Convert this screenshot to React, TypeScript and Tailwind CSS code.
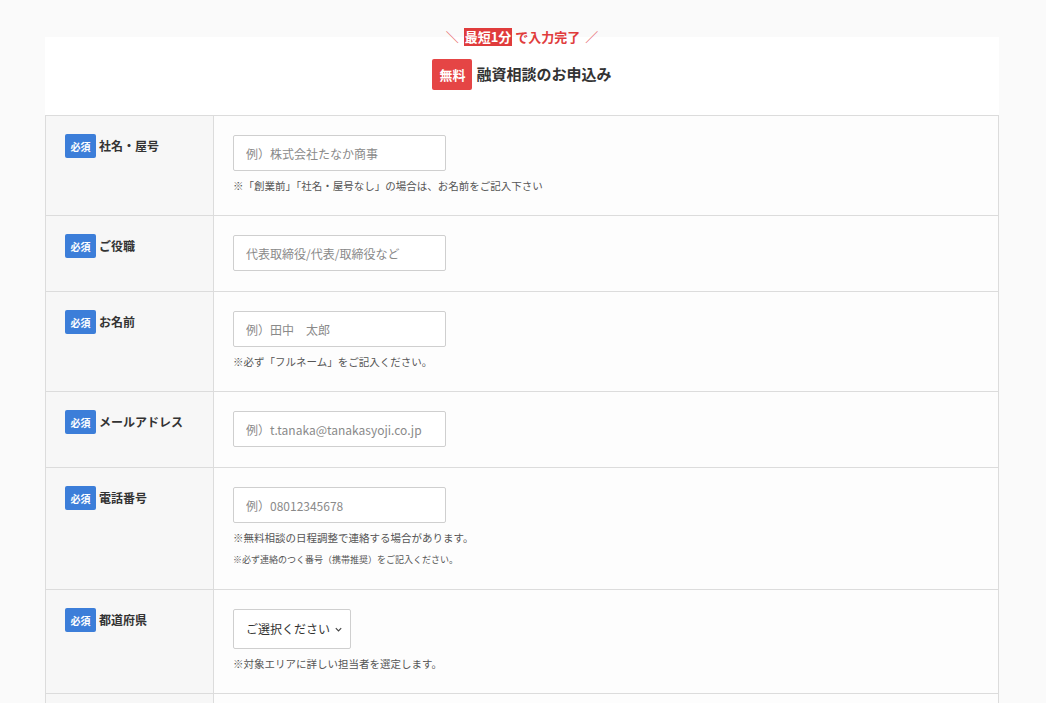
import React from 'react';

const font = "font-['Noto_Sans_CJK_JP','Noto_Sans',sans-serif]";

type Row = {
    label: string;
    kind: 'input' | 'select';
    placeholder?: string;
    notes?: { text: string; small?: boolean }[];
};

const rows: Row[] = [
    { label: '社名・屋号', kind: 'input', placeholder: '例）株式会社たなか商事', notes: [{ text: '※「創業前」「社名・屋号なし」の場合は、お名前をご記入下さい' }] },
    { label: 'ご役職', kind: 'input', placeholder: '代表取締役/代表/取締役など' },
    { label: 'お名前', kind: 'input', placeholder: '例）田中　太郎', notes: [{ text: '※必ず「フルネーム」をご記入ください。' }] },
    { label: 'メールアドレス', kind: 'input', placeholder: '例）t.tanaka@tanakasyoji.co.jp' },
    {
        label: '電話番号',
        kind: 'input',
        placeholder: '例）08012345678',
        notes: [{ text: '※無料相談の日程調整で連絡する場合があります。' }, { text: '※必ず連絡のつく番号（携帯推奨）をご記入ください。', small: true }],
    },
    { label: '都道府県', kind: 'select', notes: [{ text: '※対象エリアに詳しい担当者を選定します。' }] },
    { label: 'ご希望の融資額', kind: 'select', notes: [{ text: '※おおよその金額で構いません。' }] },
];

function Required() {
    return (
        <span className="inline-flex h-[24px] w-[31px] items-center justify-center rounded-[2px] bg-[#3c7ed9] text-[10px] font-bold text-white">
            必須
        </span>
    );
}

function Field({ row }: { row: Row }) {
    return (
        <div className="grid grid-cols-[168px_1fr] border-t border-[#dcdcdc]">
            <div className="border-r border-[#dcdcdc] bg-[#f7f7f7] pl-[19px] pt-[18px]">
                <div className="flex items-center gap-[3px]">
                    <Required />
                    <span className="text-[12px] font-bold text-[#333]">{row.label}</span>
                </div>
            </div>
            <div className="bg-[#fdfdfd] px-[19px] pb-[20px] pt-[19px]">
                {row.kind === 'input' ? (
                    <input
                        type="text"
                        placeholder={row.placeholder}
                        className="block h-[36px] w-[213px] rounded-[2px] border border-[#cfcfcf] bg-white px-[12px] text-[12px] text-[#333] placeholder:text-[#8a8a8a] outline-none"
                    />
                ) : (
                    <div className="flex h-[40px] w-[118px] items-center justify-between rounded-[2px] border border-[#cfcfcf] bg-white pl-[12px] pr-[7px] text-[12px] text-[#333]">
                        <span>ご選択ください</span>
                        <svg width="9" height="9" viewBox="0 0 10 10" fill="none" stroke="#444" strokeWidth="1.3">
                            <path d="M2 3.5 L5 6.5 L8 3.5" />
                        </svg>
                    </div>
                )}
                {row.notes?.map((n, i) =>
                    n.small ? (
                        <p key={i} className="mt-[4px] text-[9px] leading-[18px] text-[#555]">
                            {n.text}
                        </p>
                    ) : (
                        <p key={i} className="mt-[6px] text-[10.5px] leading-[18px] text-[#555]">
                            {n.text}
                        </p>
                    )
                )}
            </div>
        </div>
    );
}

export default function App() {
    return (
        <div className={`min-h-screen bg-[#fafafa] pl-[45px] pt-[37px] ${font}`}>
            <div className="w-[954px]">
                <div className="flex flex-col items-center bg-white pb-[25px]">
                    <div className="-mt-[10px] flex h-[20px] items-center gap-[3px] text-[13px] font-bold text-[#e03c3c]">
                        <span className="mr-[2px] font-normal text-[#e86a6a]">＼</span>
                        <span className="bg-[#e03c3c] px-[1px] leading-[18px] text-white">最短1分</span>
                        <span>で入力完了</span>
                        <span className="ml-[2px] font-normal text-[#e86a6a]">／</span>
                    </div>
                    <div className="mt-[12px] flex items-center gap-[4px]">
                        <span className="inline-flex h-[31px] w-[40px] items-center justify-center rounded-[2px] bg-[#e54545] text-[13px] font-bold text-white">
                            無料
                        </span>
                        <span className="text-[15px] font-bold text-[#333]">融資相談のお申込み</span>
                    </div>
                </div>
                <div className="border-x border-b border-[#dcdcdc]">
                    {rows.map((r) => (
                        <Field key={r.label} row={r} />
                    ))}
                </div>
            </div>
        </div>
    );
}
